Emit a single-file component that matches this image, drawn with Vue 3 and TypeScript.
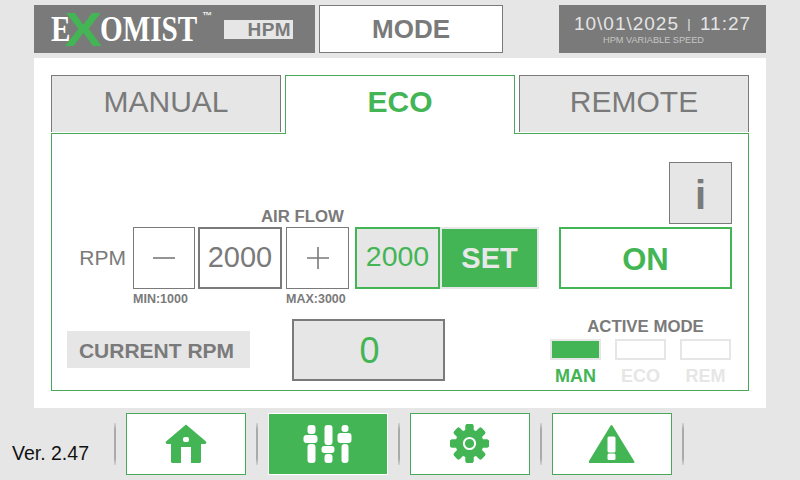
<script setup lang="ts">
const tabs = [
  { label: 'MANUAL', active: false },
  { label: 'ECO', active: true },
  { label: 'REMOTE', active: false },
]
const modes = [
  { label: 'MAN', active: true },
  { label: 'ECO', active: false },
  { label: 'REM', active: false },
]
const teeth = [0, 45, 90, 135, 180, 225, 270, 315]
</script>

<template>
  <div class="screen">
    <header class="top">
      <div class="logo">
        <span class="brand"><span>E</span><span class="x">X</span><span>OMIST</span></span>
        <span class="tm">™</span>
        <span class="hpm">HPM</span>
      </div>
      <div class="mode">MODE</div>
      <div class="clock">
        <div class="time">10\01\2025 <span class="pipe">|</span> 11:27</div>
        <div class="sub">HPM VARIABLE SPEED</div>
      </div>
    </header>

    <main class="panel">
      <nav class="tabs">
        <div v-for="t in tabs" :key="t.label" class="tab" :class="{ active: t.active }">{{ t.label }}</div>
      </nav>
      <section class="content">
        <div class="left">
          <div class="airflow">AIR FLOW</div>
          <div class="controls">
            <span class="rpm">RPM</span>
            <div class="btn step">
              <svg width="24" height="24" viewBox="0 0 24 24"><path d="M1 12h22" stroke="#7a7a7a" stroke-width="1.6" /></svg>
            </div>
            <div class="value">2000</div>
            <div class="btn step plus">
              <svg width="24" height="24" viewBox="0 0 24 24"><path d="M1 12h22M12 1v22" stroke="#7a7a7a" stroke-width="1.6" /></svg>
            </div>
            <div class="target">2000</div>
            <div class="set">SET</div>
          </div>
          <div class="limits">
            <span class="min">MIN:1000</span>
            <span class="max">MAX:3000</span>
          </div>
          <div class="current">
            <div class="current-label">CURRENT RPM</div>
            <div class="current-value">0</div>
          </div>
        </div>
        <div class="right">
          <div class="info">i</div>
          <div class="on">ON</div>
          <div class="active-title">ACTIVE MODE</div>
          <div class="modes">
            <div v-for="m in modes" :key="m.label" class="m" :class="{ lit: m.active }">
              <div class="lamp"></div>
              <div class="m-label">{{ m.label }}</div>
            </div>
          </div>
        </div>
      </section>
    </main>

    <footer class="bottom">
      <span class="ver">Ver. 2.47</span>
      <i class="sep"></i>
      <div class="nav">
        <svg width="42" height="40" viewBox="0 0 42 40">
          <path fill="#43b555" d="M21 0.500 41 17.500c.8 1.200 0 2.500-1.300 2.500H36V37.500c0 .9-.6 1.500-1.500 1.500H26V23h-10v16H7.500C6.600 39 6 38.400 6 37.500V20H2.300C1 20 .2 18.700 1 17.500Z" />
          <rect x="18" y="13" width="6" height="5" rx="2" fill="#fff" />
        </svg>
      </div>
      <i class="sep"></i>
      <div class="nav on-nav">
        <svg width="50" height="40" viewBox="2.500 0 50 40">
          <g fill="#fff">
            <rect x="7" y="1" width="8" height="9" rx="3" />
            <rect x="3" y="11" width="14" height="8" rx="3" />
            <rect x="7" y="20" width="8" height="19" rx="3" />
            <rect x="24" y="1" width="8" height="20" rx="3" />
            <rect x="21" y="22" width="13" height="7" rx="3" />
            <rect x="24" y="30" width="8" height="9" rx="3" />
            <rect x="41" y="1" width="7" height="7" rx="3" />
            <rect x="37" y="9" width="14" height="10" rx="3" />
            <rect x="41" y="20" width="7" height="19" rx="3" />
          </g>
        </svg>
      </div>
      <i class="sep"></i>
      <div class="nav">
        <svg width="40" height="40" viewBox="0.500 0.500 40 40">
          <g fill="#43b555">
            <rect v-for="a in teeth" :key="a" x="16" y="0.500" width="8" height="39" rx="2" :transform="`rotate(${a} 20 20)`" />
            <circle cx="20" cy="20" r="14" />
          </g>
          <circle cx="20" cy="20" r="5.600" fill="none" stroke="#fff" stroke-width="2" />
        </svg>
      </div>
      <i class="sep"></i>
      <div class="nav">
        <svg width="46" height="40" viewBox="0.500 0 46 40">
          <path fill="#43b555" stroke="#43b555" stroke-width="2" stroke-linejoin="round" d="M23 2 45 38H1Z" />
          <rect x="19" y="12.500" width="8" height="16" rx="1.500" fill="#fff" />
          <rect x="19" y="29.500" width="8" height="6.500" rx="1.500" fill="#fff" />
        </svg>
      </div>
      <i class="sep"></i>
    </footer>
  </div>
</template>

<style scoped>
.screen {
  width: 800px;
  height: 480px;
  box-sizing: border-box;
  padding-top: 5px;
  background: #e6e6e6;
  color: #7a7a7a;
  font-family: "Liberation Sans", Arial, sans-serif;
  overflow: hidden;
}
.top {
  display: flex;
  height: 48px;
  margin: 0 34px 5px;
}
.logo {
  width: 281px;
  background: #797a79;
  display: flex;
  align-items: center;
  padding-left: 17px;
  box-sizing: border-box;
}
.brand {
  font-family: "Liberation Serif", serif;
  font-weight: 700;
  font-size: 36px;
  color: #fff;
  line-height: 48px;
  height: 48px;
  transform: scaleX(0.81);
  transform-origin: left center;
  width: 149px;
  flex: none;
  white-space: nowrap;
}
.x {
  display: inline-block;
  width: 42px;
  margin-left: -5.500px;
  text-align: center;
  color: #43b555;
  font-family: "Liberation Sans", sans-serif;
  font-size: 48px;
  line-height: 20px;
  transform: translateY(5px) scaleX(1.45);
}
.tm {
  color: #eee;
  font-size: 10px;
  font-weight: 700;
  align-self: flex-start;
  margin: 5px 0 0 2px;
  width: 22px;
  flex: none;
}
.hpm {
  width: 69px;
  height: 19px;
  background: #e6e6e6;
  font-size: 19px;
  font-weight: 700;
  letter-spacing: 0.4px;
  line-height: 20px;
  text-align: right;
  padding-right: 2px;
  box-sizing: border-box;
  flex: none;
}
.mode {
  width: 184px;
  margin-left: 4px;
  box-sizing: border-box;
  border: 1px solid #7a7a7a;
  background: #fff;
  font-size: 26px;
  font-weight: 700;
  display: flex;
  align-items: center;
  justify-content: center;
}
.clock {
  margin-left: auto;
  width: 207px;
  background: #797a79;
  color: #e4e4e4;
  text-align: center;
}
.time {
  font-size: 19px;
  letter-spacing: 1px;
  line-height: 20px;
  margin-top: 9px;
  white-space: nowrap;
}
.pipe {
  font-size: 13px;
  vertical-align: 2px;
  margin: 0 2px;
}
.sub {
  font-size: 9.200px;
  line-height: 11px;
  color: #c6c6c6;
  margin-top: 1px;
  padding-right: 18px;
}
.panel {
  margin: 0 34px;
  height: 350px;
  background: #fff;
  padding: 17px 17px 0;
  box-sizing: border-box;
}
.tabs {
  display: flex;
  gap: 4px;
  height: 58px;
}
.tab {
  width: 230px;
  height: 57px;
  box-sizing: border-box;
  background: #e6e6e6;
  border: 1px solid #7a7a7a;
  border-bottom: none;
  font-size: 30px;
  display: flex;
  align-items: center;
  justify-content: center;
  padding-bottom: 5px;
}
.tab.active {
  height: 59px;
  background: #fff;
  border-color: #4aa85a;
  color: #43b555;
  font-weight: 700;
  padding-bottom: 6px;
  position: relative;
  z-index: 1;
}
.content {
  height: 258px;
  box-sizing: border-box;
  border: 1px solid #4aa85a;
  display: flex;
  justify-content: space-between;
  padding: 28px 16px 0;
}
.left {
  width: 472px;
  padding-top: 45px;
}
.airflow {
  font-size: 16.800px;
  font-weight: 700;
  line-height: 20px;
  padding-left: 193px;
}
.controls {
  display: flex;
  height: 62px;
  align-items: stretch;
}
.rpm {
  width: 65px;
  font-size: 21px;
  text-align: right;
  padding-right: 7px;
  box-sizing: border-box;
  line-height: 62px;
}
.btn {
  box-sizing: border-box;
  border: 1px solid #7a7a7a;
  background: #fff;
  display: flex;
  align-items: center;
  justify-content: center;
}
.step { width: 62px; }
.step.plus { width: 63px; margin-left: 4px; }
.value {
  width: 84px;
  margin-left: 3px;
  box-sizing: border-box;
  border: 2px solid #7a7a7a;
  font-size: 29px;
  display: flex;
  align-items: center;
  justify-content: center;
  padding-bottom: 1px;
}
.target {
  width: 85px;
  margin-left: 6px;
  box-sizing: border-box;
  border: 2px solid #43b555;
  background: #e6e6e6;
  color: #43b555;
  font-size: 28.500px;
  display: flex;
  align-items: center;
  justify-content: center;
  padding-bottom: 3px;
}
.set {
  width: 99px;
  box-sizing: border-box;
  border: 2px solid #e6e6e6;
  background: #43b555;
  color: #e8e8e8;
  font-size: 29px;
  font-weight: 700;
  display: flex;
  align-items: center;
  justify-content: center;
}
.limits {
  font-size: 12.500px;
  font-weight: 700;
  line-height: 14px;
  margin-top: 3px;
  display: flex;
  padding-left: 65px;
}
.min { width: 153px; }
.current {
  display: flex;
  margin-top: 13px;
}
.current-label {
  width: 183px;
  height: 37px;
  margin: 12px 0 0 -1px;
  padding-right: 4px;
  box-sizing: border-box;
  background: #e6e6e6;
  font-size: 21px;
  font-weight: 700;
  line-height: 39px;
  text-align: center;
}
.current-value {
  width: 153px;
  height: 62px;
  margin-left: 42px;
  box-sizing: border-box;
  border: 2px solid #7a7a7a;
  background: #e6e6e6;
  color: #43b555;
  font-size: 36px;
  display: flex;
  align-items: center;
  justify-content: center;
  padding: 2px 0 0 2px;
}
.right {
  width: 173px;
  display: flex;
  flex-direction: column;
  align-items: flex-end;
}
.info {
  width: 63px;
  height: 62px;
  box-sizing: border-box;
  border: 1px solid #7a7a7a;
  background: #e6e6e6;
  font-size: 40px;
  font-weight: 700;
  display: flex;
  align-items: center;
  justify-content: center;
  padding-top: 4px;
}
.on {
  width: 173px;
  height: 62px;
  margin-top: 3px;
  box-sizing: border-box;
  border: 2px solid #43b555;
  color: #43b555;
  font-size: 31px;
  font-weight: 700;
  display: flex;
  align-items: center;
  justify-content: center;
  padding-top: 3px;
}
.active-title {
  width: 173px;
  margin-top: 28px;
  font-size: 16.800px;
  font-weight: 700;
  line-height: 20px;
  text-align: center;
}
.modes {
  width: 181px;
  display: flex;
  justify-content: space-between;
  margin: 2px 1px 0 0;
  flex: none;
}
.m {
  width: 51px;
  text-align: center;
  color: #e6e6e6;
}
.lamp {
  height: 21px;
  box-sizing: border-box;
  border: 2px solid #e6e6e6;
  background: #fff;
}
.m.lit .lamp {
  background: #43b555;
}
.m.lit {
  color: #43b555;
}
.m-label {
  font-size: 18px;
  font-weight: 700;
  line-height: 20px;
  margin-top: 6px;
}
.bottom {
  height: 62px;
  margin-top: 5px;
  display: flex;
  align-items: center;
  padding-left: 12px;
}
.ver {
  width: 102px;
  flex: none;
  font-size: 19.500px;
  color: #111;
  padding-top: 18px;
}
.sep {
  width: 2px;
  height: 42px;
  flex: none;
  background: linear-gradient(#d4d4d4, #aaa 15%, #aaa 85%, #d4d4d4);
}
.nav {
  width: 120px;
  height: 62px;
  flex: none;
  margin: 0 10px;
  box-sizing: border-box;
  border: 1px solid #4aa85a;
  background: #fff;
  display: flex;
  align-items: center;
  justify-content: center;
}
.nav.on-nav {
  background: #43b555;
  border-color: #fff;
}
</style>
